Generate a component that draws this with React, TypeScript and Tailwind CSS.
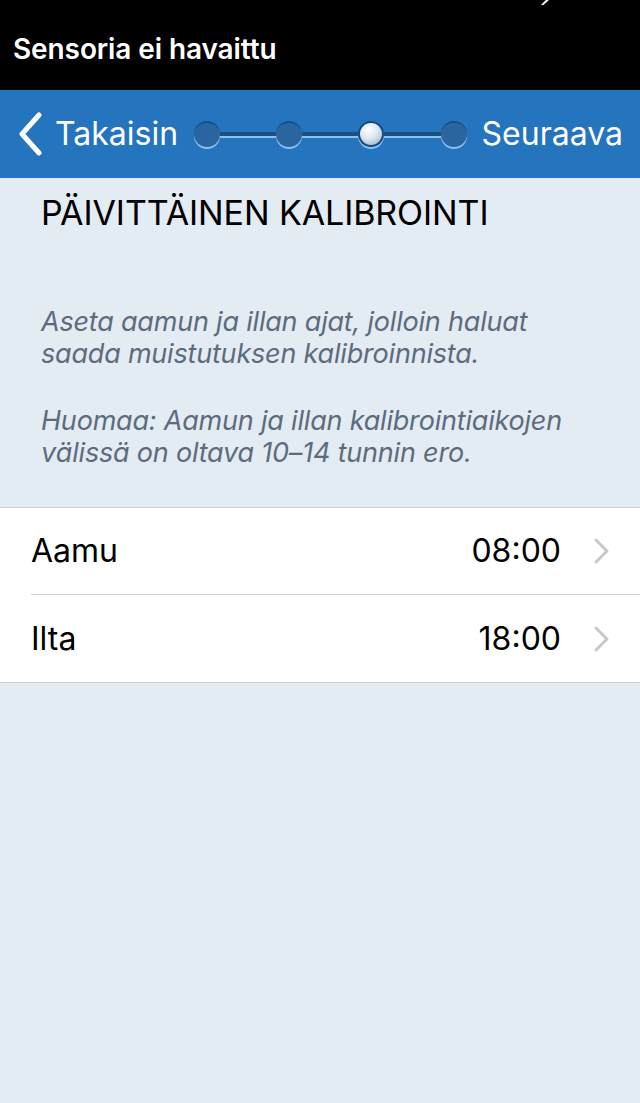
const FONT = { fontFamily: "Inter, 'Noto Sans', sans-serif" };

function StepDot({ active }: { active?: boolean }) {
  if (active) {
    return (
      <div className="relative z-10 size-[26px] shrink-0 rounded-full bg-[#174a7c] p-[2px] shadow-[0_2px_0_#8cc0ee]">
        <div className="size-full rounded-full bg-[radial-gradient(circle_at_40%_30%,#ffffff_0%,#dce6f0_45%,#8ea8c3_100%)]" />
      </div>
    );
  }
  return (
    <div className="relative z-10 size-[26px] shrink-0 rounded-full border-t-2 border-[#1a4e81] bg-[#2a65a0] shadow-[0_2px_0_#8cc0ee]" />
  );
}

function StepLine() {
  return (
    <div className="-mx-[2px] h-[4px] flex-1 bg-[#1b4f82] shadow-[0_2px_0_#8cc0ee]" />
  );
}

function Chevron() {
  return (
    <svg
      width="18"
      height="28"
      viewBox="0 0 18 28"
      fill="none"
      className="ml-[32px]"
    >
      <path
        d="M3 3 L14 14 L3 25"
        stroke="#c7c7cc"
        strokeWidth="3"
        strokeLinecap="round"
        strokeLinejoin="round"
      />
    </svg>
  );
}

function TimeRow({
  label,
  value,
  divider,
}: {
  label: string;
  value: string;
  divider?: boolean;
}) {
  return (
    <div className="flex h-[87px] items-stretch pl-[31px]">
      <div
        className={`flex flex-1 items-center pr-[29px] ${
          divider ? "border-b border-[#cfd1d4]" : ""
        }`}
      >
        <span className="flex-1 text-[32px] text-black">{label}</span>
        <span className="text-[32px] text-black">{value}</span>
        <Chevron />
      </div>
    </div>
  );
}

export default function App() {
  return (
    <div
      className="flex h-[1103px] w-[640px] flex-col bg-[#e3ebf3]"
      style={FONT}
    >
      <div className="relative flex h-[90px] items-center bg-black px-[13px] pt-[7px]">
        <span className="text-[28px] font-semibold tracking-[-0.1px] text-white">
          Sensoria ei havaittu
        </span>
        <div className="absolute left-[541px] top-0 h-[5px] w-[8px] bg-white [clip-path:polygon(60%_0,100%_0,30%_100%,0_100%)]" />
      </div>

      <div className="flex h-[88px] items-center bg-[#2474be] pr-[17px]">
        <div className="flex items-center pl-[17px]">
          <svg width="27" height="44" viewBox="0 0 27 44" fill="none">
            <path
              d="M22 3 L5 22 L22 41"
              stroke="white"
              strokeWidth="5"
              strokeLinecap="round"
              strokeLinejoin="round"
            />
          </svg>
          <span className="ml-[11px] text-[32px] text-white">Takaisin</span>
        </div>
        <div className="ml-[16px] flex flex-1 items-center">
          <StepDot />
          <StepLine />
          <StepDot />
          <StepLine />
          <StepDot active />
          <StepLine />
          <StepDot />
        </div>
        <span className="ml-[15px] text-[32px] text-white">Seuraava</span>
      </div>

      <div className="px-[41px] pt-[15px]">
        <h1 className="text-[34px] leading-[40px] tracking-[-0.1px] text-black">
          PÄIVITTÄINEN KALIBROINTI
        </h1>
        <p className="mt-[73px] text-[27px] italic leading-[32px] tracking-[-0.2px] text-[#5d6b7d]">
          Aseta aamun ja illan ajat, jolloin haluat saada muistutuksen
          kalibroinnista.
        </p>
        <p className="mt-[35px] text-[27px] italic leading-[32px] tracking-[-0.2px] text-[#5d6b7d]">
          Huomaa: Aamun ja illan kalibrointiaikojen välissä on oltava 10–14
          tunnin ero.
        </p>
      </div>

      <div className="mt-[38px] border-y border-[#cfd1d4] bg-white">
        <TimeRow label="Aamu" value="08:00" divider />
        <TimeRow label="Ilta" value="18:00" />
      </div>
    </div>
  );
}
